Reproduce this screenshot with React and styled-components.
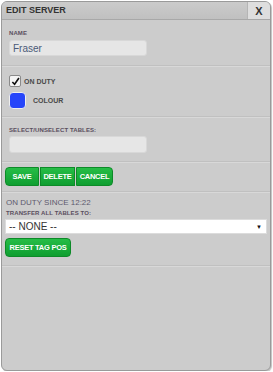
import React from "react";
import styled, { createGlobalStyle } from "styled-components";

const GlobalStyle = createGlobalStyle`
	html, body {
		margin: 0;
		padding: 0;
		background: #ffffff;
	}
	body {
		font-family: "Liberation Sans", Arial, sans-serif;
	}
`;

const Panel = styled.div`
	width: 268px;
	height: 368px;
	margin: 1px 0 0 1px;
	background: #cccccc;
	border: 1px solid #9a9a9a;
	border-radius: 6px;
	box-shadow: 1px 1px 1px rgba(0, 0, 0, 0.25);
	overflow: hidden;
	display: flex;
	flex-direction: column;
`;

const Header = styled.div`
	display: flex;
	align-items: stretch;
	height: 17px;
	background: linear-gradient(#cbcbcb, #c0c0c0);
	border-bottom: 1px solid #a8a8a8;
`;

const Title = styled.div`
	flex: 1;
	padding-left: 4px;
	font-size: 9px;
	font-weight: bold;
	color: #333;
	line-height: 17px;
`;

const CloseButton = styled.div`
	width: 22px;
	background: #dedede;
	border-left: 1px solid #b5b5b5;
	font-size: 11px;
	font-weight: bold;
	color: #333;
	text-align: center;
	line-height: 18px;
`;

const Section = styled.div`
	padding: ${(p) => p.$pad || "6px 5px"};
	border-bottom: 1px solid #c0c0c0;
	box-shadow: 0 1px 0 #d8d8d8;
	display: flex;
	flex-direction: column;
	align-items: flex-start;
	gap: ${(p) => p.$gap || "0px"};
`;

const Label = styled.div`
	font-size: 6px;
	line-height: 7px;
	font-weight: bold;
	color: #5a4e5e;
	margin: 0 0 ${(p) => p.$mb || "2px"} ${(p) => p.$ml || "2px"};
	letter-spacing: 0.1px;
`;

const TextInput = styled.div`
	width: 138px;
	height: ${(p) => p.$h || "16px"};
	margin-left: 2px;
	background: #e6e6e6;
	border: 1px solid #d8d8d8;
	border-radius: 3px;
	font-size: 10px;
	color: #4b5a78;
	line-height: ${(p) => p.$h || "16px"};
	padding-left: 3px;
	box-sizing: border-box;
`;

const Row = styled.div`
	display: flex;
	align-items: center;
	gap: ${(p) => p.$gap || "3px"};
	margin-left: 2px;
`;

const CheckBox = styled.div`
	width: 10px;
	height: 10px;
	background: #f4f4f4;
	border: 1px solid #8a8a8a;
	border-radius: 2px;
	display: flex;
	align-items: center;
	justify-content: center;
`;

const RowText = styled.div`
	font-size: 7px;
	font-weight: bold;
	color: #4a4a4a;
`;

const Swatch = styled.div`
	width: 15px;
	height: 15px;
	background: #2645fa;
	border: 1px solid #eeeeee;
	border-radius: 4px;
`;

const ButtonGroup = styled.div`
	display: flex;
	gap: 1px;
`;

const GreenButton = styled.div`
	width: ${(p) => p.$w};
	height: 17px;
	background: linear-gradient(#26bd46, #0f9e30);
	border: 1px solid #0d8a28;
	border-radius: ${(p) => p.$radius || "4px"};
	color: #ffffff;
	font-size: 7.5px;
	font-weight: bold;
	letter-spacing: -0.25px;
	line-height: 17px;
	text-align: center;
	white-space: nowrap;
`;

const InfoText = styled.div`
	font-size: 8px;
	line-height: 9px;
	color: #5e5a6e;
	margin: 0 0 3px 1px;
`;

const Select = styled.div`
	align-self: stretch;
	height: 13px;
	background: #ffffff;
	border: 1px solid #dcdcdc;
	display: flex;
	align-items: center;
	justify-content: space-between;
	padding: 0 4px 0 3px;
	margin-bottom: 4px;
	font-size: 10px;
	color: #333;
`;

const Arrow = styled.span`
	font-size: 6px;
	color: #111;
`;

export default function App() {
	return (
		<>
			<GlobalStyle />
			<Panel>
				<Header>
					<Title>EDIT SERVER</Title>
					<CloseButton>X</CloseButton>
				</Header>
				<Section $pad="10px 5px 9px">
					<Label $mb="3px">NAME</Label>
					<TextInput>Fraser</TextInput>
				</Section>
				<Section $pad="9px 5px 7px" $gap="5px">
					<Row>
						<CheckBox>
							<svg width="9" height="9" viewBox="0 0 10 10">
								<path d="M1.5 5.5 L4 8 L8.8 1.2" fill="none" stroke="#111" strokeWidth="1.8" />
							</svg>
						</CheckBox>
						<RowText>ON DUTY</RowText>
					</Row>
					<Row $gap="7px">
						<Swatch />
						<RowText>COLOUR</RowText>
					</Row>
				</Section>
				<Section $pad="10px 5px 8px">
					<Label $mb="2px">SELECT/UNSELECT TABLES:</Label>
					<TextInput $h="17px" />
				</Section>
				<Section $pad="5px 3px 5px">
					<ButtonGroup>
						<GreenButton $w="32px" $radius="4px 0 0 4px">SAVE</GreenButton>
						<GreenButton $w="33px" $radius="0">DELETE</GreenButton>
						<GreenButton $w="35px" $radius="0 4px 4px 0">CANCEL</GreenButton>
					</ButtonGroup>
				</Section>
				<Section $pad="6px 3px 8px">
					<InfoText>ON DUTY SINCE 12:22</InfoText>
					<Label $mb="2px" $ml="1px">TRANSFER ALL TABLES TO:</Label>
					<Select>
						<span>-- NONE --</span>
						<Arrow>▼</Arrow>
					</Select>
					<GreenButton $w="64px">RESET TAG POS</GreenButton>
				</Section>
			</Panel>
		</>
	);
}
